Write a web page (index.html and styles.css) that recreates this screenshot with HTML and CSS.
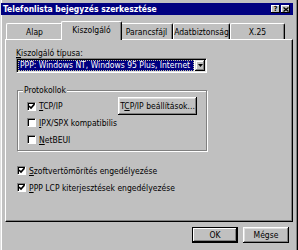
FILE: index.html
```html
<!DOCTYPE html>
<html lang="hu">
<head>
    <meta charset="UTF-8">
    <title>Telefonlista bejegyzés szerkesztése</title>
    <link rel="stylesheet" href="styles.css">
</head>
<body>
    <div class="window">
        <div class="titlebar">
            <span class="title">Telefonlista bejegyzés szerkesztése</span>
            <div class="caption-buttons">
                <span class="cap-btn">?</span>
                <span class="cap-btn">
                    <svg width="6" height="5" viewBox="0 0 6 5"><path d="M0.5 0.5 L5.5 4.5 M5.5 0.5 L0.5 4.5" stroke="#000" stroke-width="1.3"/></svg>
                </span>
            </div>
        </div>

        <div class="tabs">
            <div class="tab w57">Alap</div>
            <div class="tab w57 active">Kiszolgáló</div>
            <div class="tab w53">Parancsfájl</div>
            <div class="tab w57">Adatbiztonság</div>
            <div class="tab w55">X.25</div>
        </div>

        <div class="panel">
            <div class="field-label"><u>K</u>iszolgáló típusa:</div>
            <div class="combo">
                <div class="combo-value">PPP: Windows NT, Windows 95 Plus, Internet</div>
                <div class="combo-arrow">
                    <svg width="5" height="3" viewBox="0 0 5 3"><path d="M0 0 H5 L2.5 3 Z" fill="#000"/></svg>
                </div>
            </div>

            <div class="group">
                <span class="group-label">Protokollok</span>
                <div class="check-row first">
                    <div class="check-item">
                        <span class="box checked">
                            <svg width="7" height="7" viewBox="0 0 7 7"><path d="M1 3 L3 5 L6.5 1" fill="none" stroke="#000" stroke-width="1.6"/></svg>
                        </span>
                        <span><u>T</u>CP/IP</span>
                    </div>
                    <button class="btn settings">T<u>C</u>P/IP beállítások...</button>
                </div>
                <div class="check-row second">
                    <span class="box"></span>
                    <span><u>I</u>PX/SPX kompatibilis</span>
                </div>
                <div class="check-row">
                    <span class="box"></span>
                    <span><u>N</u>etBEUI</span>
                </div>
            </div>

            <div class="check-row outer gap-top">
                <span class="box checked">
                    <svg width="7" height="7" viewBox="0 0 7 7"><path d="M1 3 L3 5 L6.5 1" fill="none" stroke="#000" stroke-width="1.6"/></svg>
                </span>
                <span><u>S</u>zoftvertömörítés engedélyezése</span>
            </div>
            <div class="check-row outer">
                <span class="box checked">
                    <svg width="7" height="7" viewBox="0 0 7 7"><path d="M1 3 L3 5 L6.5 1" fill="none" stroke="#000" stroke-width="1.6"/></svg>
                </span>
                <span><u>P</u>PP LCP kiterjesztések engedélyezése</span>
            </div>
        </div>

        <div class="actions">
            <button class="btn dialog default">OK</button>
            <button class="btn dialog">Mégse</button>
        </div>
    </div>
</body>
</html>
```

FILE: styles.css
```css
* {
    box-sizing: border-box;
}
body {
    margin: 0;
    background: #c0c0c0;
    font-family: "Liberation Sans Narrow", "DejaVu Sans Condensed", "Liberation Sans", sans-serif;
    font-size: 8.5px;
    color: #000;
}
u {
    text-decoration: underline;
    text-underline-offset: 1px;
}
.window {
    width: 298px;
    height: 250px;
    overflow: hidden;
    background: #c0c0c0;
    padding-top: 3px;
    box-shadow: inset 1px 0 #dfdfdf, inset 2px 0 #fff, inset -1px 0 #000, inset -2px 0 #808080;
}

/* title bar */
.titlebar {
    height: 12px;
    margin: 0 5px 0 1px;
    padding: 0 3px 0 2px;
    background: #000080;
    color: #fff;
    font-weight: bold;
    display: flex;
    align-items: center;
    justify-content: space-between;
}
.caption-buttons {
    display: flex;
    gap: 1px;
}
.cap-btn {
    width: 9px;
    height: 8px;
    background: #c0c0c0;
    color: #000;
    font-size: 7px;
    line-height: 8px;
    text-align: center;
    display: flex;
    align-items: center;
    justify-content: center;
    box-shadow: inset -1px -1px #000, inset 1px 1px #fff;
}

/* tabs */
.tabs {
    position: relative;
    z-index: 1;
    display: flex;
    align-items: flex-end;
    height: 24px;
    padding-left: 6px;
}
.tab {
    height: 16px;
    background: #c0c0c0;
    border-top: 1px solid #fff;
    border-left: 1px solid #fff;
    border-right: 1px solid #000;
    border-radius: 2px 2px 0 0;
    box-shadow: inset -1px 0 #808080;
    display: flex;
    align-items: center;
    justify-content: center;
    padding-top: 1px;
}
.w53 { width: 53px; }
.w55 { width: 55px; }
.w57 { width: 57px; }
.tab.active {
    position: relative;
    z-index: 1;
    width: 61px;
    height: 19px;
    margin: 0 -2px -1px;
    padding-top: 0;
    padding-bottom: 3px;
}

/* tab page */
.panel {
    margin-left: 5px;
    width: 288px;
    height: 183px;
    border: 1px solid;
    border-color: #fff #000 #000 #fff;
    box-shadow: inset -1px -1px #808080;
    padding: 8px 0 0 10px;
}
.field-label {
    line-height: 10px;
}
.combo {
    display: flex;
    width: 191px;
    height: 15px;
    background: #fff;
    border: 1px solid;
    border-color: #808080 #fff #fff #808080;
    box-shadow: inset 1px 1px #000, inset -1px -1px #dfdfdf;
    padding: 1px;
}
.combo-value {
    flex: 1;
    margin-right: 1px;
    background: #000080;
    color: #fff;
    outline: 1px dotted #c0c0a0;
    outline-offset: -1px;
    line-height: 11px;
    padding-left: 2px;
    white-space: nowrap;
    overflow: hidden;
}
.combo-arrow {
    width: 10px;
    background: #c0c0c0;
    box-shadow: inset -1px -1px #000, inset 1px 1px #dfdfdf, inset -2px -2px #808080, inset 2px 2px #fff;
    display: flex;
    align-items: center;
    justify-content: center;
}

/* group box */
.group {
    position: relative;
    margin: 17px 0 0 1px;
    width: 190px;
    height: 61px;
    border: 1px solid #808080;
    box-shadow: inset 1px 1px #fff, 1px 1px #fff;
    padding: 6px 9px 0 9px;
}
.group-label {
    position: absolute;
    top: -6px;
    left: 5px;
    padding: 0 1px;
    background: #c0c0c0;
    line-height: 10px;
}

/* checkboxes */
.check-row {
    display: flex;
    align-items: center;
    height: 17px;
    white-space: nowrap;
}
.check-row.first {
    height: 18px;
    justify-content: space-between;
}
.check-row.second {
    margin-top: -1px;
}
.check-row.outer {
    margin-left: 1px;
}
.check-row.gap-top {
    margin-top: 11px;
}
.check-item {
    display: flex;
    align-items: center;
}
.box {
    width: 9px;
    height: 9px;
    margin-right: 3px;
    background: #fff;
    border: 1px solid;
    border-color: #808080 #fff #fff #808080;
    box-shadow: inset 1px 1px #000;
    display: flex;
    align-items: center;
    justify-content: center;
}
.box svg {
    display: block;
}

/* buttons */
.btn {
    border: none;
    padding: 0;
    margin: 0;
    font: inherit;
    color: #000;
    background: #c0c0c0;
    box-shadow: inset -1px -1px #000, inset 1px 1px #fff, inset -2px -2px #808080, inset 2px 2px #dfdfdf;
}
.btn.settings {
    width: 79px;
    height: 18px;
}
.btn.dialog {
    width: 46px;
    height: 16px;
}
.btn.default {
    box-shadow: inset 0 0 0 1px #000, inset -2px -2px #000, inset 2px 2px #fff, inset -3px -3px #808080;
}
.actions {
    display: flex;
    justify-content: flex-end;
    gap: 5px;
    margin: 5px 0 0 5px;
    width: 288px;
    padding-right: 4px;
}
```
